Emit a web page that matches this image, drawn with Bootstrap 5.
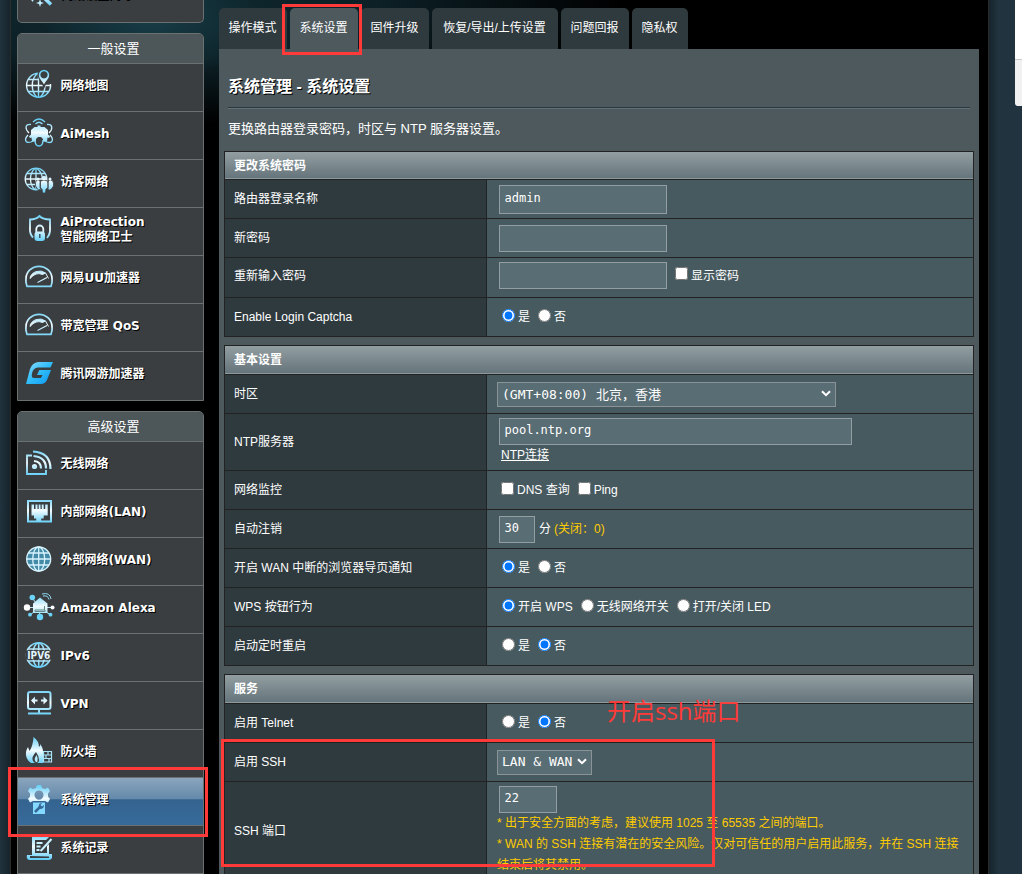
<!DOCTYPE html>
<html lang="zh-CN">
<head>
<meta charset="utf-8">
<meta name="viewport" content="width=device-width, initial-scale=1">
<title>系统管理 - 系统设置</title>
<link href="https://cdn.jsdelivr.net/npm/bootstrap@5.3.0/dist/css/bootstrap.min.css" rel="stylesheet">
<style>
body{background:#21333e;color:#fff;font:12px/16px "Liberation Sans","Noto Sans CJK SC",sans-serif;height:874px;overflow:hidden;position:relative}
.shell{width:979px;height:874px;margin-left:10px;padding-left:6px;border:solid #2b2b2b;border-width:0 1px;overflow:hidden;
 background:radial-gradient(ellipse 110px 60px at 140px 20px,#173c46 0,transparent 100%),radial-gradient(ellipse 480px 125px at 130px 0,#102930 0,#0c2026 50%,transparent 100%) #000}
.edge-l{left:0;top:0;width:10px;height:874px;background:linear-gradient(90deg,transparent,#16242c)}
.edge-r{left:989px;top:0;width:9px;height:874px;background:linear-gradient(270deg,transparent,#16242c)}
.side{width:187px;font-family:"DejaVu Sans","Noto Sans CJK SC",sans-serif}
.menu{border:1px solid #6b7071;border-radius:5px 5px 0 0;background:#3a3e40;margin-bottom:10px}
.menu.first{height:23px;border-top:0;border-radius:0 0 5px 5px;overflow:hidden}
.menu.first .item{margin-top:-27px}
.menu-h{height:30px;border-bottom:1px solid #6b7071;background:#4d5659;border-radius:4px 4px 0 0;font-size:13px;padding-left:6px}
.item{height:48px;border-bottom:1px solid #6b7071;padding:0 0 2px 4px;font-weight:700;line-height:15px;text-shadow:1px 1px 0 #000}
.item svg{width:32px;height:32px;margin:0 6.5px 5px 0;flex:none;overflow:visible}
.item .two{margin-bottom:2px}
.menu>.item:last-child{border-bottom:0;padding-bottom:3px}
.item.on{background:linear-gradient(#8ba5bd 0,#6489aa 45%,#34638f 46%,#376b9b 100%)}
.main{width:760px;margin-left:15px}
.tabs{height:41px;margin-top:8px;gap:3px}
.tab-i{width:68px;background:#2f3a3e;border-radius:5px 5px 0 0;padding:0 1px 1px 0}
.tab-i.on{background:#4d595d}
.w126{width:126px}.w56{width:56px}
.panel{background:#4d595d;height:830px;padding:0 6px 0 5px}
.title-l{font-size:16px;font-weight:700;line-height:20px;padding:28px 0 0 4px;height:58px;text-shadow:1px 1px 0 #000}
.rule{height:2px;margin:0 3px 0 4px;background:linear-gradient(#2b373b 50%,#617279 50%)}
.desc{font-size:13px;line-height:20px;padding:10px 0 0 4px;height:42px}
.tbl{border:1px solid #222;border-bottom:0;width:750px;margin-bottom:8px}
.tbl-h{height:28px;padding-left:9px;font-weight:700;background:linear-gradient(#929ea1,#66757c 96%,#8b989c 97%);border-bottom:1px solid #222}
.tbl-h.tall{height:29px}
.line{height:39px;border-bottom:1px solid #222}
.line.h40{height:40px}.line.h57{height:57px}.line.h100{height:110px}
.lab{width:262px;background:#2f3a3e;border-right:1px solid #222;padding-left:9px;flex:none}
.val{background:#475a5f;flex:1;padding-left:12px}
.fld{background:#596d74;border:1px solid #929ea1;border-radius:0;color:#fff;font:12px "DejaVu Sans Mono","Noto Sans CJK SC",monospace;height:27px;padding:0 5px 3px 4.5px;width:168px;display:block;outline:0}
.fld.h29{height:29px}.w353{width:353px}.w36{width:36px}.w58{width:58px}
.sel{background:#596d74;border:1px solid #8b9396;font:13px "DejaVu Sans Mono","Noto Sans CJK SC",monospace;height:25px;width:339px;margin-left:-2px;padding:0 4px 2px 4px}
.sel.short{width:95px}
.opt{height:16px;margin-right:8px}
.opt input{width:13px;height:13px;margin:0 3px 4px 0}
.opts{padding-left:3px}
.up{padding-bottom:4px}
.yel{color:#fc0}
.notes{line-height:21px;margin-left:-2px;width:465px}
.redbox{border:3px solid #ff3a38}
.r1{left:282px;top:4px;width:80px;height:51px}
.r2{left:8px;top:767px;width:200px;height:70px}
.r3{left:221px;top:739px;width:494px;height:128px}
.redtxt{left:607px;top:696px;font:24px/30px "Open Sans","Noto Sans CJK SC",sans-serif;color:#ff3a38;white-space:nowrap}
.widget{left:1015px;top:0;width:7px;height:106px;background:linear-gradient(#fff 59px,#ccc 59px,#ccc 60px,#f1f1f1 60px);border-radius:0 0 0 3px}
</style>
<script src="https://cdn.jsdelivr.net/npm/bootstrap@5.3.0/dist/js/bootstrap.bundle.min.js"></script>
</head>
<body>
<svg width="0" height="0" class="position-absolute">
<defs>
<linearGradient id="g" gradientUnits="userSpaceOnUse" x1="0" y1="3" x2="0" y2="30"><stop offset="0" stop-color="#62cdf6"/><stop offset=".5" stop-color="#f2fbff"/><stop offset="1" stop-color="#5accf8"/></linearGradient>
<linearGradient id="b" x1="0" y1="0" x2="1" y2="1"><stop offset="0" stop-color="#8fdcff"/><stop offset=".5" stop-color="#2fbcf8"/><stop offset="1" stop-color="#0a96f5"/></linearGradient>
<g id="gauge" fill="none" stroke="url(#g)"><path d="M5 26.300Q3.300 22.500 4 18.500A13 12.200 0 0 1 30 18.500Q30.700 22.500 29 26.300Z" stroke-width="1.700"/><path d="M8 18.500A9.500 8.500 0 0 1 23.500 13L20.500 14.500Q14 11.500 8 18.500z" fill="url(#g)" stroke-width="1"/><path d="M23.500 13l3 5.500" stroke-width="1"/><path d="M15.500 22.500l9.500-5" stroke-width="1.200"/></g>
</defs>
</svg>
<div class="shell d-flex align-items-start">
 <div class="side">
  <div class="menu first"><div class="item d-flex align-items-center"><svg viewBox="0 0 32 32"><path d="M17 16l12 11.500M6 19l3-2M9 21l3-3" stroke="url(#g)" stroke-width="3.500"/><path d="M9 14l2 4 4 1-3 2-1 4-3-3-4 0 3-3z M18 22l1 3 3 1-3 1-1 3-1-3-3-1 3-1z" fill="#bfeeff"/></svg>网络设置向导</div></div>
  <div class="menu">
   <div class="menu-h d-flex align-items-center justify-content-center">一般设置</div>
   <div class="item d-flex align-items-center"><svg viewBox="0 0 32 32" fill="none" stroke="url(#g)" stroke-width="1.400"><path d="M17 5.300A12 12 0 1 0 28.500 16M16.500 5.300v24.300M4.500 17.500h24M6.500 11.500h11M6 23.500h21M15.500 5.500C8.500 11 8.500 24 15.500 29.500M17.500 29.500c4-3 5.500-7 5.500-12"/><path d="M22 17C20 12.500 17.200 10.500 17.200 7a4.800 4.800 0 0 1 9.600 0C26.800 10.500 24 12.500 22 17z" stroke="#3a3e40" stroke-width="3"/><path fill="url(#g)" fill-rule="evenodd" stroke="none" d="M22 16.500C20 12.500 16.800 10.500 16.800 7a5.200 5.200 0 0 1 10.400 0C27.200 10.500 24 12.500 22 16.500zM22 3.300a3.600 3.600 0 1 0 .01 0z"/></svg>网络地图</div>
   <div class="item d-flex align-items-center"><svg viewBox="0 0 32 32" fill="none" stroke="url(#g)" stroke-width="1.200"><path d="M11 6q6-6 12 0M13.500 8q3.500-3.500 7 0"/><path fill="url(#g)" stroke="none" d="M15.500 9.500h3v1.500h4l3.500 3v4.500l2 2-1 1.500-1.500-.5-.5 4h-4v-2.500l-2-2h-3l-2 2v2.500h-4l-.5-4-1.500.5-1-1.500 2-2v-4.500l3.500-3h3z"/><path d="M9 8.500C2.500 8 3 13 7 17M25 8.500c6-.5 6 4.500 2 8.500M6 19c-4 4-3 9 3 7l4-2M28 19c4 4 3 9-3 7l-4-2M13 24c0 8 8 8 8 0" stroke-width="1.300"/></svg>AiMesh</div>
   <div class="item d-flex align-items-center"><svg viewBox="0 0 32 32" fill="none" stroke="url(#g)" stroke-width="1.300"><circle cx="14" cy="15" r="10.800"/><path d="M14 4v22M3.200 15h21.600M5 9.500h18M5 20.500h10M13 4.500C7 9 7 21 13 25.500M15 4.500c5 4 5.500 8 5 11"/><path fill="url(#g)" stroke="#3a3e40" stroke-width=".8" d="M13.500 19q0-3 2.500-3t2.500 3v6q-2.500 2-3 0l-2-3zM26 19q0-3 2.500-3t3 3v3l-2 3q-2.500 2-3.500 0zM18 19q0-3 4-3t4 3v5l-2 1-.5 4h-3L20 25l-2-1z"/><g fill="url(#g)" stroke="none"><circle cx="22" cy="14" r="2.300"/><circle cx="16" cy="15" r="1.500"/><circle cx="28" cy="15" r="1.500"/></g></svg>访客网络</div>
   <div class="item d-flex align-items-center"><svg viewBox="0 0 32 32" fill="none" stroke="url(#g)" stroke-width="1.800"><path d="M11 25.500Q7.500 22 8 16V7.500Q14 7.500 17.500 4 21 7.500 28 7.500V16Q28.500 22 25 26"/><path d="M14.300 20v-3a3.500 3.500 0 0 1 7 0v3"/><rect x="12.500" y="19.500" width="10.500" height="9.500" rx="3" fill="url(#g)" stroke="none"/><path d="M17.800 22v4" stroke="#34525e" stroke-width="1.500"/></svg><span class="two">AiProtection<br>智能网络卫士</span></div>
   <div class="item d-flex align-items-center"><svg viewBox="0 0 32 32"><use href="#gauge"/></svg>网易UU加速器</div>
   <div class="item d-flex align-items-center"><svg viewBox="0 0 32 32"><use href="#gauge"/></svg>带宽管理 QoS</div>
   <div class="item d-flex align-items-center"><svg viewBox="0 0 32 32"><path fill="url(#b)" d="M31 6l-2.500 5.500H16Q11 12 10 17.500 9 22 12 22h7l1.500-3H15l2.300-5H29l-4 10q-2 4-6 4H4L8 13Q10.500 6.500 16 6z"/></svg>腾讯网游加速器</div>
  </div>
  <div class="menu">
   <div class="menu-h d-flex align-items-center justify-content-center">高级设置</div>
   <div class="item d-flex align-items-center"><svg viewBox="0 0 32 32" fill="none" stroke="url(#g)" stroke-width="1.800"><path d="M10 9.500H5V28H24V24"/><path d="M11 5.500Q28.500 6.500 28.500 23M11.500 10Q24 11 24 22.500M12 15Q19 15.500 19 22.500" stroke-width="2.200"/><circle cx="12.500" cy="20.500" r="2.600" fill="url(#g)" stroke="none"/></svg>无线网络</div>
   <div class="item d-flex align-items-center"><svg viewBox="0 0 32 32"><path d="M6 7h23v20.500H6z" fill="none" stroke="url(#g)" stroke-width="2"/><path fill="url(#g)" d="M9.500 10.500h2.500v4.500h1.500v-4.500h2v4.500h1.200v-4.500h1.800v4.500h1.200v-4.500h2v4.500h1.500v-4.500h2.500v11h-4v3h-2.500v3h-5v-3h-2.200v-3H9.500z"/></svg>内部网络(LAN)</div>
   <div class="item d-flex align-items-center"><svg viewBox="0 0 32 32"><g stroke="#d7f3ff" stroke-width="1.300" fill="none"><circle cx="16.700" cy="17" r="12" fill="#438aa6"/><ellipse cx="16.700" cy="17" rx="6" ry="12"/><path d="M16.700 5v24M4.700 17h24M6.500 11h20.500M6.500 23h20.500"/></g></svg>外部网络(WAN)</div>
   <div class="item d-flex align-items-center"><svg viewBox="0 0 32 32"><path d="M10 7.500l7 10 11 7M5 17.500h25.500M8 25l9-7 1 9" stroke="#b9e8f8" fill="none"/><path d="M11 13.500l7-6 7.500 6V23H11z" fill="url(#g)"/><path d="M13 20h10v1.500H13zM22.500 16v4" stroke="#688" fill="none"/><g fill="#6bd3fa"><circle cx="10.300" cy="7.500" r="2.800"/><circle cx="8" cy="24.700" r="1.900"/><circle cx="28.500" cy="24.700" r="1.900"/><circle cx="18" cy="27" r="3.200"/></g><g fill="#fff"><circle cx="5" cy="17.500" r="3.200"/><circle cx="30.500" cy="17.500" r="2"/></g><path d="M20 4q8-2 9 5M21 6q5-1 6 3.500" stroke="#8edcf7" fill="none"/></svg>Amazon Alexa</div>
   <div class="item d-flex align-items-center"><svg viewBox="0 0 32 32"><g stroke="url(#g)" stroke-width="1.600" fill="none"><circle cx="16.700" cy="17" r="12.200"/><ellipse cx="16.700" cy="17" rx="6" ry="12"/><path d="M16.700 5v24M7 11h19.500M7 23h19.500"/></g><path fill="#3a3e40" d="M3.500 12.300h26.500v9.400H3.500z"/><text x="16.800" y="21" text-anchor="middle" textLength="23" lengthAdjust="spacingAndGlyphs" font-size="11" fill="#e2f7ff" style="text-shadow:none">IPV6</text></svg>IPv6</div>
   <div class="item d-flex align-items-center"><svg viewBox="0 0 32 32" fill="none" stroke="url(#g)" stroke-width="2"><rect x="6" y="6" width="22.500" height="17" rx="2"/><path d="M10 14.500h5.500M19 14.500h5.500M17 24v3M6 27.500h23" /><path fill="url(#g)" stroke="none" d="M9 14.500l4-4v8zM25.500 14.500l-4-4v8z"/></svg>VPN</div>
   <div class="item d-flex align-items-center"><svg viewBox="0 0 32 32"><path fill="url(#g)" fill-rule="evenodd" d="M11.500 3Q17 7 17 13q1.500-1 1-3 4 5 3 11v8H9Q3 25 4 18q.5-3 2-5l1.500 4Q11 12 11.500 3zM14 18q-5 5-3 9 1 2 3 2 3 0 3-3 0-4-3-8z"/><path d="M14.500 21q-3 4-1 6.500 1 1 2 0 1-3-1-6.500z" fill="#b5eaff"/><path d="M21.500 17.500h8V28h-8zM21.500 21h8M21.500 24.500h8M26 17.500V21M24 21v3.500M27 24.500V28" fill="none" stroke="#a8e3fa" stroke-width="1.200"/></svg>防火墙</div>
   <div class="item on d-flex align-items-center"><svg viewBox="0 0 32 32"><path fill="url(#g)" fill-rule="evenodd" d="M15 3h4l1 3 3 1 3-1.500 2 3.500-2 2.500v3L28 17l-2 3.500-3-1.500H11l-3 1.500L6 17l2-2.500v-3L6 9l2-3.500L11 7l3-1zM17 8.500a4.500 4.500 0 1 0 .01 0z"/><path fill="#83d9ff" d="M11 20.500h12V32H11z"/><path d="M13 30l5-5" stroke="#356797" stroke-width="2.500"/><path d="M17 23q0-2 3-2l-1.500 2 1.500 1.500 2-1.500q0 4-4 4-2-1-1-4z" fill="#356797"/></svg>系统管理</div>
   <div class="item d-flex align-items-center"><svg viewBox="0 0 32 32"><path fill="url(#g)" fill-rule="evenodd" d="M10 7h17l-3 3H13v13h12v-7l2-2v10h3v4q-1 2-3 2H7q-3-1-2-5h5zM8 26v2h19v-1.500z"/><path d="M14.500 13h6M14.500 16.500h4M14.500 20h3M29.500 9l-9 10-2 2" stroke="#caf1ff" stroke-width="2"/></svg>系统记录</div>
   <div class="item"></div>
  </div>
 </div>
 <div class="main">
  <div class="tabs d-flex text-center">
   <div class="tab-i d-flex align-items-center justify-content-center">操作模式</div><div class="tab-i on d-flex align-items-center justify-content-center">系统设置</div><div class="tab-i d-flex align-items-center justify-content-center">固件升级</div><div class="tab-i w126 d-flex align-items-center justify-content-center">恢复/导出/上传设置</div><div class="tab-i d-flex align-items-center justify-content-center">问题回报</div><div class="tab-i w56 d-flex align-items-center justify-content-center">隐私权</div>
  </div>
  <div class="panel">
   <div class="title-l">系统管理 - 系统设置</div>
   <div class="rule"></div>
   <div class="desc">更换路由器登录密码，时区与 NTP 服务器设置。</div>
   <div class="tbl">
    <div class="tbl-h d-flex align-items-center">更改系统密码</div>
    <div class="line d-flex"><div class="lab d-flex align-items-center">路由器登录名称</div><div class="val d-flex align-items-center"><input class="fld h29" value="admin"></div></div>
    <div class="line d-flex"><div class="lab d-flex align-items-center">新密码</div><div class="val d-flex align-items-center"><input class="fld"></div></div>
    <div class="line h40 d-flex"><div class="lab d-flex align-items-center pb-1">重新输入密码</div><div class="val d-flex align-items-center up"><input class="fld"><label class="opt d-flex align-items-center ms-2"><input type="checkbox" class="check-pw">显示密码</label></div></div>
    <div class="line d-flex"><div class="lab d-flex align-items-center">Enable Login Captcha</div><div class="val d-flex align-items-center"><div class="opts d-flex"><label class="opt d-flex align-items-center"><input type="radio" name="cap" checked>是</label><label class="opt d-flex align-items-center"><input type="radio" name="cap">否</label></div></div></div>
   </div>
   <div class="tbl">
    <div class="tbl-h tall d-flex align-items-center">基本设置</div>
    <div class="line d-flex"><div class="lab d-flex align-items-center">时区</div><div class="val d-flex align-items-center"><div class="sel d-flex align-items-center justify-content-between"><span>(GMT+08:00) 北京，香港</span><svg width="10" height="7" viewBox="0 0 10 7"><path d="M1 1.200l4 4 4-4" fill="none" stroke="#fff" stroke-width="2"/></svg></div></div></div>
    <div class="line h57 d-flex"><div class="lab d-flex align-items-center">NTP服务器</div><div class="val pt-1"><input class="fld w353" value="pool.ntp.org"><a href="#" class="d-inline-block text-white" style="margin:2px 0 0 2px">NTP连接</a></div></div>
    <div class="line d-flex"><div class="lab d-flex align-items-center">网络监控</div><div class="val d-flex align-items-center"><div class="opts d-flex" style="margin-left:-1px"><label class="opt d-flex align-items-center"><input type="checkbox">DNS 查询</label><label class="opt d-flex align-items-center"><input type="checkbox">Ping</label></div></div></div>
    <div class="line d-flex"><div class="lab d-flex align-items-center">自动注销</div><div class="val d-flex align-items-center"><input class="fld w36" value="30"><span class="ms-1">分</span><span class="yel" style="margin-left:3px">(关闭：0)</span></div></div>
    <div class="line d-flex"><div class="lab d-flex align-items-center">开启 WAN 中断的浏览器导页通知</div><div class="val d-flex align-items-center"><div class="opts d-flex"><label class="opt d-flex align-items-center"><input type="radio" name="wan" checked>是</label><label class="opt d-flex align-items-center"><input type="radio" name="wan">否</label></div></div></div>
    <div class="line d-flex"><div class="lab d-flex align-items-center">WPS 按钮行为</div><div class="val d-flex align-items-center"><div class="opts d-flex"><label class="opt d-flex align-items-center"><input type="radio" name="wps" checked>开启 WPS</label><label class="opt d-flex align-items-center"><input type="radio" name="wps">无线网络开关</label><label class="opt d-flex align-items-center"><input type="radio" name="wps">打开/关闭 LED</label></div></div></div>
    <div class="line d-flex"><div class="lab d-flex align-items-center">启动定时重启</div><div class="val d-flex align-items-center"><div class="opts d-flex"><label class="opt d-flex align-items-center"><input type="radio" name="rb">是</label><label class="opt d-flex align-items-center"><input type="radio" name="rb" checked>否</label></div></div></div>
   </div>
   <div class="tbl">
    <div class="tbl-h tall d-flex align-items-center">服务</div>
    <div class="line d-flex"><div class="lab d-flex align-items-center">启用 Telnet</div><div class="val d-flex align-items-center"><div class="opts d-flex"><label class="opt d-flex align-items-center"><input type="radio" name="tel">是</label><label class="opt d-flex align-items-center"><input type="radio" name="tel" checked>否</label></div></div></div>
    <div class="line d-flex"><div class="lab d-flex align-items-center">启用 SSH</div><div class="val d-flex align-items-center"><div class="sel short d-flex align-items-center justify-content-between"><span>LAN &amp; WAN</span><svg width="10" height="7" viewBox="0 0 10 7"><path d="M1 1.200l4 4 4-4" fill="none" stroke="#fff" stroke-width="2"/></svg></div></div></div>
    <div class="line h100 d-flex"><div class="lab d-flex align-items-center" style="padding-bottom:12px">SSH 端口</div><div class="val pt-1"><input class="fld w58" value="22"><div class="notes yel">* 出于安全方面的考虑，建议使用 1025 至 65535 之间的端口。<br>* WAN 的 SSH 连接有潜在的安全风险。仅对可信任的用户启用此服务，并在 SSH 连接结束后将其禁用。</div></div></div>
   </div>
  </div>
 </div>
</div>
<div class="edge-l position-absolute"></div><div class="edge-r position-absolute"></div>
<div class="widget position-absolute"></div>
<div class="redbox r1 position-absolute"></div>
<div class="redbox r2 position-absolute"></div>
<div class="redbox r3 position-absolute"></div>
<div class="redtxt position-absolute">开启ssh端口</div>
</body>
</html>
